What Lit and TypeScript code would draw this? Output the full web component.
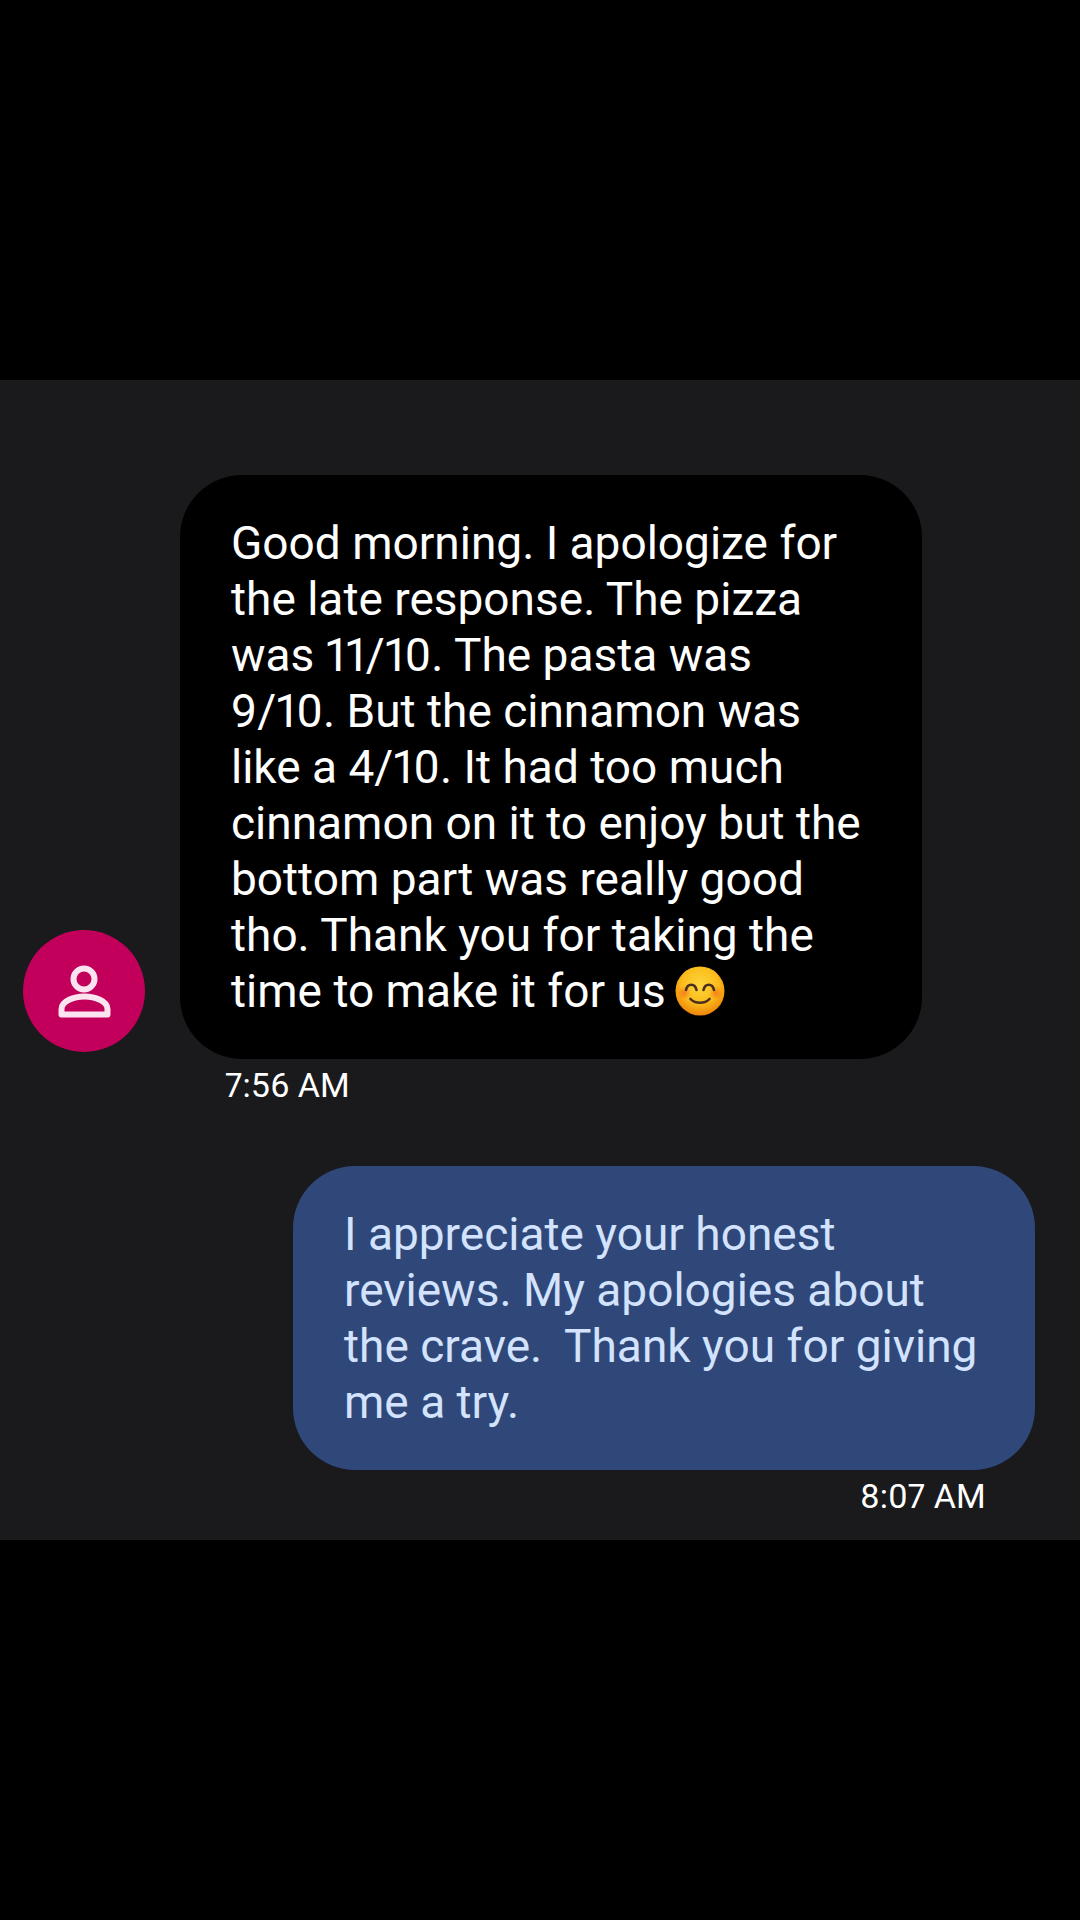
import { LitElement, html, css } from 'lit';
import { customElement } from 'lit/decorators.js';

const SMILE = html`
  <svg class="emoji" viewBox="0 0 50 50" width="50" height="50">
    <defs>
      <radialGradient id="face" cx="50%" cy="38%" r="62%">
        <stop offset="0%" stop-color="#fdd63c" />
        <stop offset="60%" stop-color="#fbbc1c" />
        <stop offset="100%" stop-color="#ee8408" />
      </radialGradient>
      <radialGradient id="blush">
        <stop offset="0%" stop-color="#f2661a" stop-opacity="0.7" />
        <stop offset="100%" stop-color="#f2661a" stop-opacity="0" />
      </radialGradient>
    </defs>
    <circle cx="25" cy="25" r="24.5" fill="url(#face)" />
    <circle cx="9" cy="27" r="7" fill="url(#blush)" />
    <circle cx="41" cy="27" r="7" fill="url(#blush)" />
    <g fill="none" stroke="#4a3020" stroke-width="2.6" stroke-linecap="round">
      <path d="M11 24 C12.5 17 20 17 21.5 24" />
      <path d="M28.5 24 C30 17 37.5 17 39 24" />
      <path d="M15.5 33 C20 38 30 38 34.5 33" />
    </g>
  </svg>
`;

const RECEIVED = [
  'Good morning. I apologize for',
  'the late response. The pizza',
  'was 11/10. The pasta was',
  '9/10. But the cinnamon was',
  'like a 4/10. It had too much',
  'cinnamon on it to enjoy but the',
  'bottom part was really good',
  'tho. Thank you for taking the',
];

const SENT = [
  'I appreciate your honest',
  'reviews. My apologies about',
  'the crave.\u00a0 Thank you for giving',
  'me a try.',
];

@customElement('app-root')
export class AppRoot extends LitElement {
  static styles = css`
    :host {
      display: flow-root;
      height: 1920px;
      background: #000;
      font-family: Roboto, "Noto Sans", sans-serif;
      font-variant-numeric: proportional-nums;
      overflow: hidden;
    }

    .panel {
      box-sizing: border-box;
      margin-top: 380px;
      height: 1160px;
      padding-top: 95px;
      background: #1a1a1c;
    }

    .row {
      display: flex;
      align-items: flex-end;
    }

    .avatar {
      flex: none;
      width: 122px;
      height: 122px;
      margin: 0 35px 7px 23px;
      border-radius: 50%;
      background: #c2005b;
      display: flex;
    }

    .bubble {
      box-sizing: border-box;
      width: 742px;
      padding: 40px 20px 40px 51px;
      border-radius: 62px;
      font-size: 46px;
      line-height: 56px;
      white-space: nowrap;
    }

    .bubble.in {
      background: #000;
      color: #fff;
    }

    .bubble.out {
      margin-left: 293px;
      background: #2f4879;
      color: #d3e3fd;
    }

    .line {
      display: flex;
      align-items: center;
      gap: 9px;
      height: 56px;
    }

    .time {
      font-size: 34px;
      line-height: 40px;
      color: #fff;
      margin-top: 6px;
    }

    .time.in {
      margin-left: 225px;
    }

    .time.out {
      margin-left: 860px;
    }

    .sent {
      margin-top: 61px;
    }
  `;

  render() {
    return html`
      <div class="panel">
        <div class="row">
          <div class="avatar">
            <svg viewBox="0 0 122 122" width="122" height="122" fill="none" stroke="#fbe3ef" stroke-width="6">
              <circle cx="61" cy="49" r="10.5" />
              <path d="M38.5 84.5 H84.5 V79 C84.5 71 72 66.5 61.5 66.5 C51 66.5 38.5 71 38.5 79 Z" stroke-linejoin="round" />
            </svg>
          </div>
          <div class="bubble in">
            ${RECEIVED.map((l) => html`<div class="line">${l}</div>`)}
            <div class="line">time to make it for us ${SMILE}</div>
          </div>
        </div>
        <div class="time in">7:56 AM</div>
        <div class="sent">
          <div class="bubble out">
            ${SENT.map((l) => html`<div class="line">${l}</div>`)}
          </div>
          <div class="time out">8:07 AM</div>
        </div>
      </div>
    `;
  }
}
